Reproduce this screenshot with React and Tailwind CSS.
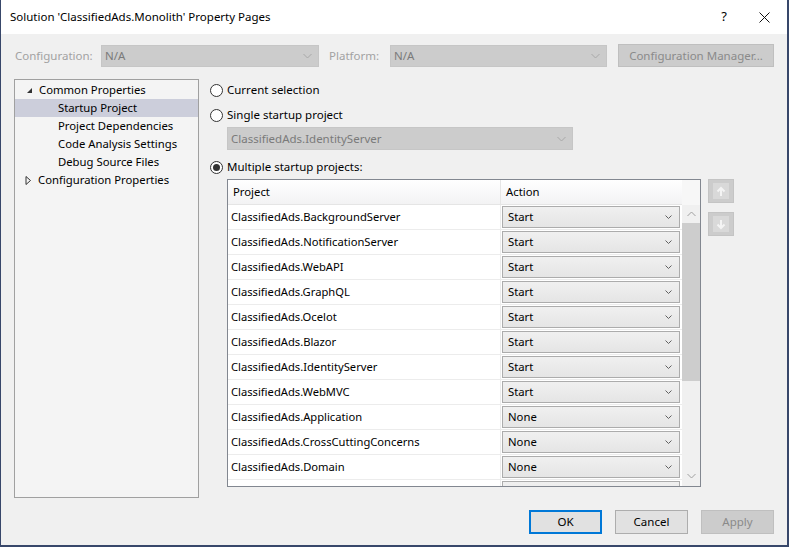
import React from 'react';

const font = { fontFamily: '"Noto Sans", "Segoe UI", "Liberation Sans", sans-serif' };

const rows = [
  ['ClassifiedAds.BackgroundServer', 'Start'],
  ['ClassifiedAds.NotificationServer', 'Start'],
  ['ClassifiedAds.WebAPI', 'Start'],
  ['ClassifiedAds.GraphQL', 'Start'],
  ['ClassifiedAds.Ocelot', 'Start'],
  ['ClassifiedAds.Blazor', 'Start'],
  ['ClassifiedAds.IdentityServer', 'Start'],
  ['ClassifiedAds.WebMVC', 'Start'],
  ['ClassifiedAds.Application', 'None'],
  ['ClassifiedAds.CrossCuttingConcerns', 'None'],
  ['ClassifiedAds.Domain', 'None'],
  ['', ''],
];

function Chevron({ color = '#a0a0a0', up = false }) {
  return (
    <svg width="9" height="6" viewBox="0 0 9 6" className="shrink-0">
      <path d={up ? 'M0.5 5 L4.5 1 L8.5 5' : 'M0.5 1 L4.5 5 L8.5 1'} fill="none" stroke={color} strokeWidth="1" />
    </svg>
  );
}

function SmallChevron() {
  return (
    <svg width="7" height="4" viewBox="0 0 7 4" className="shrink-0">
      <path d="M0.5 0.5 L3.5 3.5 L6.5 0.5" fill="none" stroke="#606060" strokeWidth="1" />
    </svg>
  );
}

function Radio({ checked, label }) {
  return (
    <div className="flex items-center h-[16px] gap-[4px]">
      <div className="w-[13px] h-[13px] rounded-full border border-[#333] bg-white flex items-center justify-center">
        {checked && <div className="w-[7px] h-[7px] rounded-full bg-[#333]" />}
      </div>
      <span className="text-[11.5px] text-black">{label}</span>
    </div>
  );
}

function MoveButton({ down }) {
  return (
    <div className="w-[26px] h-[24px] bg-[#cccccc] border border-[#c4c4c4] flex items-center justify-center">
      <div className="w-[16px] h-[16px] bg-[#d9d9d9] flex items-center justify-center">
        <svg width="10" height="11" viewBox="0 0 10 11">
          {down ? (
            <path d="M5 1 V9 M1.5 5.5 L5 9 L8.5 5.5" fill="none" stroke="#f4f4f4" strokeWidth="2" />
          ) : (
            <path d="M5 10 V2 M1.5 5.5 L5 2 L8.5 5.5" fill="none" stroke="#f4f4f4" strokeWidth="2" />
          )}
        </svg>
      </div>
    </div>
  );
}

function TreeItem({ children, indent, selected, arrow }) {
  return (
    <div className={`h-[18px] flex items-center ${selected ? 'bg-[#cccedb]' : ''}`}>
      <div className="flex items-center" style={{ paddingLeft: indent }}>
        {arrow === 'open' && (
          <svg width="7" height="7" viewBox="0 0 7 7" className="mr-[6px]">
            <path d="M6 1 L6 6 L1 6 Z" fill="#333" />
          </svg>
        )}
        {arrow === 'closed' && (
          <svg width="7" height="9" viewBox="0 0 7 9" className="mr-[6px]">
            <path d="M1 0.5 L5.5 4.5 L1 8.5 Z" fill="none" stroke="#333" strokeWidth="1" />
          </svg>
        )}
        <span className="text-[11.3px] text-black">{children}</span>
      </div>
    </div>
  );
}

export default function App() {
  return (
    <div style={font} className="w-[789px] h-[547px] flex flex-col bg-[#f0f0f0] border-l border-r-2 border-b-2 border-[#38476a] overflow-hidden">
      {/* title bar */}
      <div className="h-[34px] bg-white flex items-center shrink-0">
        <span className="ml-[9px] text-[11.5px] text-black">Solution 'ClassifiedAds.Monolith' Property Pages</span>
        <span className="ml-auto mr-[32px] text-[13px] text-black">?</span>
        <svg width="11" height="11" viewBox="0 0 11 11" className="mr-[17px]">
          <path d="M0.5 0.5 L10.5 10.5 M10.5 0.5 L0.5 10.5" stroke="#111" strokeWidth="1" />
        </svg>
      </div>

      {/* config row */}
      <div className="flex items-center mt-[10px] h-[23px] shrink-0">
        <span className="ml-[14px] w-[86px] text-[11.5px] text-[#a2a2a2]">Configuration:</span>
        <div className="w-[218px] h-[22px] bg-[#cccccc] border border-[#c6c6c6] flex items-center justify-between pl-[3px] pr-[6px]">
          <span className="text-[11.5px] text-[#7a7a7a]">N/A</span>
          <Chevron color="#a8a8a8" />
        </div>
        <span className="ml-[10px] w-[61px] text-[11.5px] text-[#a2a2a2]">Platform:</span>
        <div className="w-[217px] h-[22px] bg-[#cccccc] border border-[#c6c6c6] flex items-center justify-between pl-[3px] pr-[6px]">
          <span className="text-[11.5px] text-[#7a7a7a]">N/A</span>
          <Chevron color="#a8a8a8" />
        </div>
        <div className="ml-[11px] w-[156px] h-[23px] bg-[#cccccc] border border-[#bfbfbf] flex items-center justify-center">
          <span className="text-[11.5px] text-[#8a8a8a]">Configuration Manager...</span>
        </div>
      </div>

      {/* main */}
      <div className="flex mt-[12px] h-[419px] shrink-0">
        <div className="ml-[13px] w-[185px] h-[419px] bg-[#f4f4f4] border border-[#a0a0a0] pt-[1px]">
          <TreeItem indent={11} arrow="open">Common Properties</TreeItem>
          <TreeItem indent={43} selected>Startup Project</TreeItem>
          <TreeItem indent={43}>Project Dependencies</TreeItem>
          <TreeItem indent={43}>Code Analysis Settings</TreeItem>
          <TreeItem indent={43}>Debug Source Files</TreeItem>
          <TreeItem indent={10} arrow="closed">Configuration Properties</TreeItem>
        </div>

        <div className="ml-[11px] flex flex-col">
          <div className="mt-[3px]"><Radio label="Current selection" /></div>
          <div className="mt-[9px]"><Radio label="Single startup project" /></div>
          <div className="ml-[17px] mt-[4px] w-[346px] h-[23px] bg-[#cccccc] border border-[#c6c6c6] flex items-center justify-between pl-[3px] pr-[6px]">
            <span className="text-[11.5px] text-[#7a7a7a]">ClassifiedAds.IdentityServer</span>
            <Chevron color="#a8a8a8" />
          </div>
          <div className="mt-[9px]"><Radio checked label="Multiple startup projects:" /></div>

          <div className="flex mt-[4px]">
            {/* grid */}
            <div className="ml-[17px] w-[474px] h-[308px] border border-[#828790] bg-white flex overflow-hidden">
              <div className="w-[454px] flex flex-col">
                <div className="h-[25px] flex shrink-0 bg-gradient-to-b from-white to-[#f3f3f4] border-b border-[#e5e5e5]">
                  <div className="w-[273px] border-r border-[#e5e5e5] flex items-center pl-[5px] text-[11.3px] text-black">Project</div>
                  <div className="flex-1 flex items-center pl-[5px] text-[11.3px] text-black">Action</div>
                </div>
                {rows.map(([name, action], i) => (
                  <div key={i} className="h-[25px] flex shrink-0 border-b border-[#ececec]">
                    <div className="w-[273px] border-r border-[#ececec] flex items-center pl-[3px] text-[11.2px] text-black">{name}</div>
                    <div className="flex-1 pl-[1px] pt-[1px]">
                      <div className="w-[178px] h-[22px] border border-[#acacac] bg-gradient-to-b from-[#f0f0f0] to-[#e5e5e5] flex items-center justify-between pl-[5px] pr-[7px]">
                        <span className="text-[11.3px] text-black">{action}</span>
                        {action && <SmallChevron />}
                      </div>
                    </div>
                  </div>
                ))}
              </div>
              {/* scrollbar */}
              <div className="w-[18px] flex flex-col bg-[#f0f0f0]">
                <div className="h-[25px] bg-[#f7f7f7]" />
                <div className="h-[18px] flex items-center justify-center">
                  <Chevron color="#a0a0a0" up />
                </div>
                <div className="h-[158px] bg-[#cdcdcd]" />
                <div className="flex-1" />
                <div className="h-[20px] flex items-center justify-center">
                  <Chevron color="#a0a0a0" />
                </div>
              </div>
            </div>

            <div className="ml-[7px] flex flex-col gap-[9px]">
              <MoveButton />
              <MoveButton down />
            </div>
          </div>
        </div>
      </div>

      {/* buttons */}
      <div className="flex justify-end mt-[12px] mr-[13px] gap-[13px]">
        <div className="w-[73px] h-[24px] bg-[#e1e1e1] border-2 border-[#0078d7] flex items-center justify-center text-[11.5px] text-black">OK</div>
        <div className="w-[73px] h-[24px] bg-[#e1e1e1] border border-[#adadad] flex items-center justify-center text-[11.5px] text-black">Cancel</div>
        <div className="w-[73px] h-[24px] bg-[#cccccc] border border-[#bfbfbf] flex items-center justify-center text-[11.5px] text-[#8a8a8a]">Apply</div>
      </div>
    </div>
  );
}
